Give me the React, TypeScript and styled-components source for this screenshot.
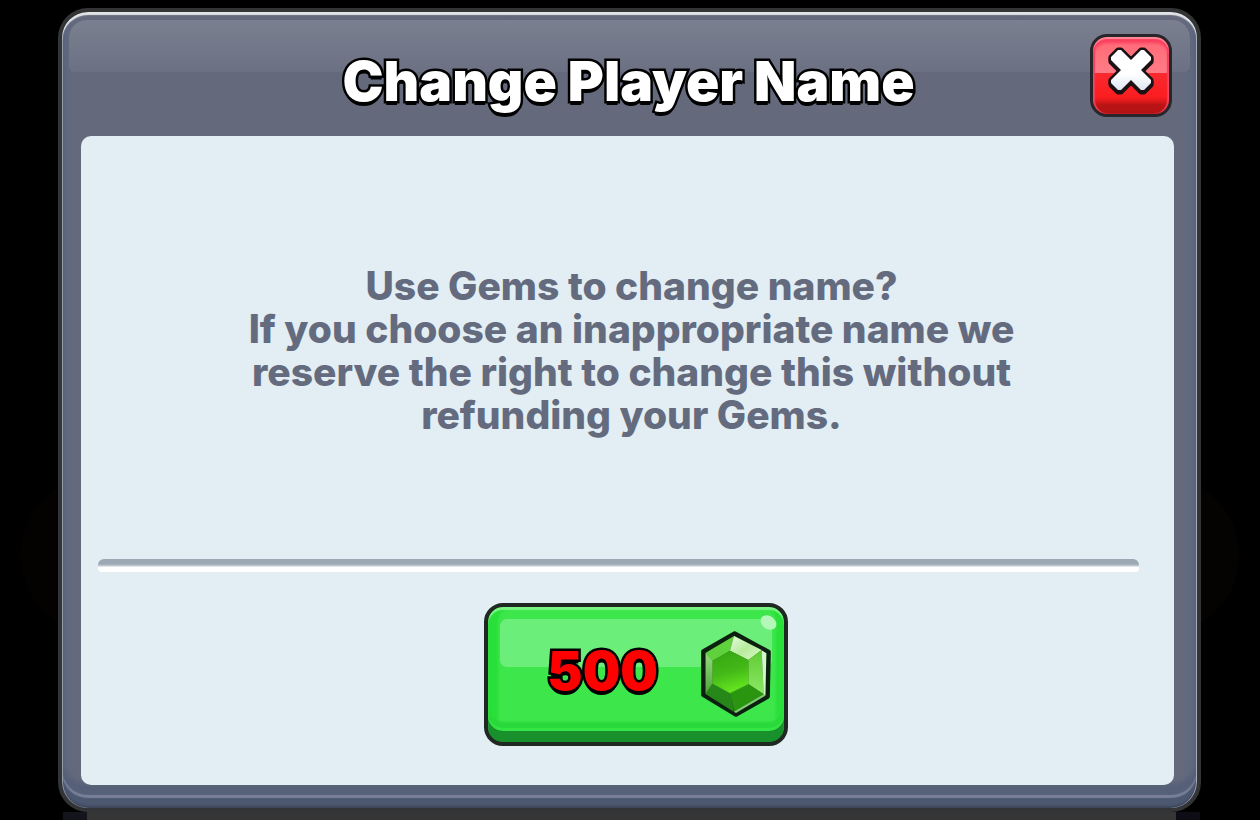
import React from "react";
import styled, { createGlobalStyle } from "styled-components";

const GlobalStyle = createGlobalStyle`
  * { box-sizing: border-box; }
  body {
    margin: 0;
    background: #000;
    font-family: Inter, "Open Sans", sans-serif;
  }
`;

const Backdrop = styled.main`
  min-height: 100vh;
  padding: 8px 59px 0 58px;
  display: flex;
  flex-direction: column;
  background:
    radial-gradient(circle at 100px 555px, #040201 78px, transparent 80px),
    radial-gradient(circle at calc(100% - 100px) 555px, #040301 78px, transparent 80px),
    #000;
`;

const Dialog = styled.section`
  position: relative;
  flex: 1;
  display: flex;
  flex-direction: column;
  padding: 0 23px 23px 19px;
  border: 4px solid #333435;
  border-radius: 30px;
  background: linear-gradient(to right, #5b6780, #646a7c 14px, #646a7c calc(100% - 14px), #5b6780);
  box-shadow:
    inset 0 3px 1px #e2e4e6,
    inset 1px 0 0 #8d95a5,
    inset -1px 0 0 #a0a5b3,
    inset 0 -2px 2px #3d4559,
    inset 0 -10px 1px #4c5770,
    inset 0 -13px 1px #79819a,
    inset 0 -24px 4px #566078;
`;

const Header = styled.header`
  display: grid;
  grid-template-columns: 1fr auto 1fr;
  height: 124px;
  padding-right: 2px;

  &::before {
    content: "";
    position: absolute;
    inset: 8px 7px auto 7px;
    height: 52px;
    border-radius: 18px 18px 6px 6px;
    background: linear-gradient(#7b8090, #6b7083);
  }
`;

const chunky = `
  font-weight: 900;
  -webkit-text-stroke: 5px #000;
  paint-order: stroke fill;
  text-shadow: 0 4px 0 #000;
`;

const Title = styled.h1`
  position: relative;
  grid-column: 2;
  align-self: center;
  margin: 14px 0 0 4px;
  font-size: 55px;
  line-height: 60px;
  color: #fff;
  white-space: nowrap;
  ${chunky}
`;

const CloseButton = styled.button`
  position: relative;
  justify-self: end;
  margin-top: 22px;
  width: 82px;
  height: 83px;
  padding: 0;
  display: flex;
  justify-content: center;
  border: 3px solid #28262a;
  border-radius: 17px;
  cursor: pointer;
  background: linear-gradient(#ff6875, #ff7c86 36px, #fa2a2f 36px, #fb1d20 60px, #e01a1c 64px, #b81416 68px, #b31214);
  box-shadow:
    inset 0 2px 1px #ff8b99,
    inset 0 6px 3px #fb3f5e,
    inset 2px 0 1px #f0405a,
    inset -2px 0 1px #f0405a;

  svg { margin-top: 9px; }
`;

const Panel = styled.div`
  flex: 1;
  display: flex;
  flex-direction: column;
  border-radius: 10px;
  background: #e2eef3;
`;

const Message = styled.p`
  flex: 1;
  display: flex;
  flex-direction: column;
  justify-content: center;
  margin: 0;
  padding: 5px 0 0 8px;
  text-align: center;
  font-size: 39px;
  line-height: 43px;
  font-weight: 800;
  color: #646b7e;

  span { display: block; }
`;

const Divider = styled.hr`
  width: auto;
  height: 13px;
  margin: 0 35px 0 17px;
  border: 0;
  border-radius: 6px 6px 4px 4px;
  background: linear-gradient(#9ca8b3 5px, #c4ced6 7px, #fff 8px);
`;

const Actions = styled.div`
  display: flex;
  justify-content: center;
  padding: 31px 0 39px 17px;
`;

const GemButton = styled.button`
  position: relative;
  width: 304px;
  height: 143px;
  display: flex;
  align-items: center;
  justify-content: flex-end;
  gap: 43px;
  padding: 0 13px 2px 0;
  border: 4px solid #202824;
  border-radius: 19px;
  cursor: pointer;
  background: #3de64b;
  box-shadow:
    inset 0 3px 1px #7af583,
    inset 0 -11px 0 #18912c,
    inset 0 -14px 1px #35e546,
    inset 0 -20px 2px #29d93b,
    inset 10px 0 3px #29df39,
    inset -8px 0 3px #29df39;

  &::before {
    content: "";
    position: absolute;
    inset: 12px 12px auto 12px;
    height: 48px;
    border-radius: 7px;
    background: #6cee7a;
  }

  &::after {
    content: "";
    position: absolute;
    top: 9px;
    right: 7px;
    width: 17px;
    height: 13px;
    border-radius: 50%;
    background: #b4f8b9;
    transform: rotate(38deg);
  }
`;

const Price = styled.span`
  position: relative;
  padding-bottom: 6px;
  font-family: Inter, sans-serif;
  font-size: 53px;
  line-height: 60px;
  color: #f00;
  ${chunky}
`;

const GemIcon = styled.svg`
  position: relative;
  flex: none;
  z-index: 1;
`;

const Underlay = styled.div`
  height: 8px;
  margin: 0 1px 0 5px;
  border-left: 24px solid #14141d;
  border-right: 24px solid #0e0d16;
  background: #363636;
`;

const crossPath =
  "M10 3 L13 3 L23 13 L33 3 L36 3 L43 10 L43 13 L33 23 L43 33 L43 36 L36 43 L33 43 L23 33 L13 43 L10 43 L3 36 L3 33 L13 23 L3 13 L3 10 Z";

const Cross = () => (
  <svg width="48" height="52" viewBox="-1 -1 48 52" aria-hidden="true">
    <defs>
      <linearGradient id="cross" x1="0" y1="0" x2="0" y2="1">
        <stop offset="0.6" stopColor="#fff" />
        <stop offset="1" stopColor="#dfe6f2" />
      </linearGradient>
    </defs>
    <path
      d={crossPath}
      fill="#1c1114"
      stroke="#1c1114"
      strokeWidth="5"
      strokeLinejoin="round"
      transform="translate(0 2)"
    />
    <path
      d={crossPath}
      fill="url(#cross)"
      stroke="#1c1114"
      strokeWidth="5"
      strokeLinejoin="round"
      paintOrder="stroke"
    />
  </svg>
);

const Gem = () => (
  <GemIcon width="70" height="86" viewBox="0 0 210 258" aria-hidden="true">
    <defs>
      <linearGradient id="core" x1="0.3" y1="0" x2="0.55" y2="1">
        <stop offset="0" stopColor="#35a812" />
        <stop offset="0.5" stopColor="#43b817" />
        <stop offset="1" stopColor="#68ea20" />
      </linearGradient>
      <linearGradient id="shine" x1="0" y1="0" x2="1" y2="1">
        <stop offset="0" stopColor="#eafbe0" />
        <stop offset="0.5" stopColor="#b7ec9c" />
        <stop offset="1" stopColor="#dcf8cb" />
      </linearGradient>
      <linearGradient id="left" x1="0" y1="0" x2="0" y2="1">
        <stop offset="0" stopColor="#96dc7c" />
        <stop offset="1" stopColor="#4da33c" />
      </linearGradient>
      <linearGradient id="right" x1="0" y1="0" x2="0" y2="1">
        <stop offset="0" stopColor="#5fcb34" />
        <stop offset="1" stopColor="#8ce864" />
      </linearGradient>
    </defs>
    <path
      d="M101 7 L203 63 L200 197 L105 251 L7 192 L7 61 Z"
      fill="#256b20"
      stroke="#0c2010"
      strokeWidth="13"
      strokeLinejoin="round"
    />
    <path d="M99 15 L87 59 L35 89 L14 66 Z" fill="#5fd13d" />
    <path d="M99 15 L182 57 L142 87 L87 59 Z" fill="url(#shine)" />
    <path d="M14 66 L35 89 L35 157 L14 189 Z" fill="url(#left)" />
    <path d="M182 57 L188 190 L142 159 L142 87 Z" fill="url(#right)" />
    <path d="M182 58 L196 67 L193 194 L188 190 Z" fill="#d5f6cc" />
    <path d="M35 157 L87 186 L98 242 L14 189 Z" fill="#278819" />
    <path d="M142 159 L188 190 L101 241 L87 186 Z" fill="#2a950f" />
    <path d="M98 242 L188 190 L193 194 L105 246 Z" fill="#7fca73" />
    <path d="M87 59 L142 87 L142 159 L87 186 L35 157 L35 89 Z" fill="url(#core)" />
    <path d="M35 157 L87 186 L142 159" fill="none" stroke="#58cf25" strokeWidth="2" />
  </GemIcon>
);

export default function App() {
  return (
    <>
      <GlobalStyle />
      <Backdrop>
        <Dialog role="dialog" aria-labelledby="dialog-title">
          <Header>
            <Title id="dialog-title">Change Player Name</Title>
            <CloseButton type="button" aria-label="Close">
              <Cross />
            </CloseButton>
          </Header>
          <Panel>
            <Message>
              <span>Use Gems to change name?</span>
              <span>If you choose an inappropriate name we</span>
              <span>reserve the right to change this without</span>
              <span>refunding your Gems.</span>
            </Message>
            <Divider />
            <Actions>
              <GemButton type="button">
                <Price>500</Price>
                <Gem />
              </GemButton>
            </Actions>
          </Panel>
        </Dialog>
        <Underlay />
      </Backdrop>
    </>
  );
}
